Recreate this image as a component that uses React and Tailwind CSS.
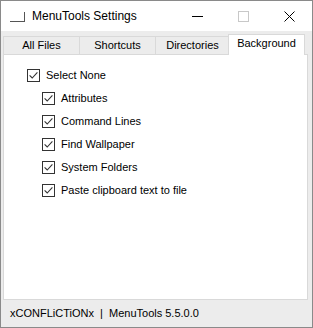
import React from "react";

const Check = ({ label }) => (
  <div className="flex items-center h-[23px]">
    <div className="w-[13px] h-[13px] border border-[#333] bg-white flex items-center justify-center shrink-0">
      <svg width="11" height="11" viewBox="0 0 11 11">
        <path d="M1.6 5.4 L4.2 8 L9.4 2.4" fill="none" stroke="#333" strokeWidth="1.1" />
      </svg>
    </div>
    <span className="ml-[6px] text-[11px] text-black leading-none">{label}</span>
  </div>
);

export default function App() {
  const tabs = [
    ["All Files", "w-[76px]"],
    ["Shortcuts", "w-[76px]"],
    ["Directories", "w-[74px]"],
  ];
  return (
    <div
      className="w-[313px] h-[328px] border border-[#8a8a8a] bg-[#ececec] flex flex-col overflow-hidden"
      style={{ fontFamily: '"Liberation Sans", Arial, sans-serif' }}
    >
      {/* title bar */}
      <div className="h-[30px] bg-white flex items-center shrink-0">
        <div className="ml-[9px] w-[15px] h-[10px] mt-[1px] border-r border-b border-[#555] shrink-0" />
        <span className="ml-[7px] text-[12px] text-black">MenuTools Settings</span>
        <div className="ml-auto flex items-center">
          <div className="w-[46px] h-[30px] flex items-center justify-center">
            <div className="w-[11px] h-px bg-black" />
          </div>
          <div className="w-[46px] h-[30px] flex items-center justify-center">
            <div className="w-[11px] h-[11px] border border-[#c8c8c8]" />
          </div>
          <div className="w-[46px] h-[30px] flex items-center justify-center">
            <svg width="11" height="11" viewBox="0 0 11 11">
              <path d="M0.5 0.5 L10.5 10.5 M10.5 0.5 L0.5 10.5" stroke="#000" strokeWidth="1" />
            </svg>
          </div>
        </div>
      </div>

      {/* tabs */}
      <div className="pl-[2px] pt-[3px] flex-1 flex flex-col">
        <div className="flex items-end h-[20px]">
          {tabs.map(([t, w]) => (
            <div
              key={t}
              className={`h-[18px] ${w} flex items-center justify-center text-[11px] text-black border-t border-l border-[#d9d9d9] bg-[#ececec]`}
            >
              {t}
            </div>
          ))}
          <div className="h-[21px] w-[77px] -ml-px flex items-center justify-center text-[11px] text-black bg-white border-t border-l border-r border-[#d9d9d9] -mb-px relative z-10 pb-[3px]">
            Background
          </div>
        </div>
        <div className="w-[305px] h-[246px] bg-white border border-[#d9d9d9] pt-[9px] pl-[23px]">
          <Check label="Select None" />
          <div className="pl-[15px]">
            <Check label="Attributes" />
            <Check label="Command Lines" />
            <Check label="Find Wallpaper" />
            <Check label="System Folders" />
            <Check label="Paste clipboard text to file" />
          </div>
        </div>
        <div className="flex-1 flex items-center pl-[7px] pb-[1px] text-[11px] text-black">
          xCONFLiCTiONx&nbsp; |&nbsp; MenuTools 5.5.0.0
        </div>
      </div>
    </div>
  );
}
